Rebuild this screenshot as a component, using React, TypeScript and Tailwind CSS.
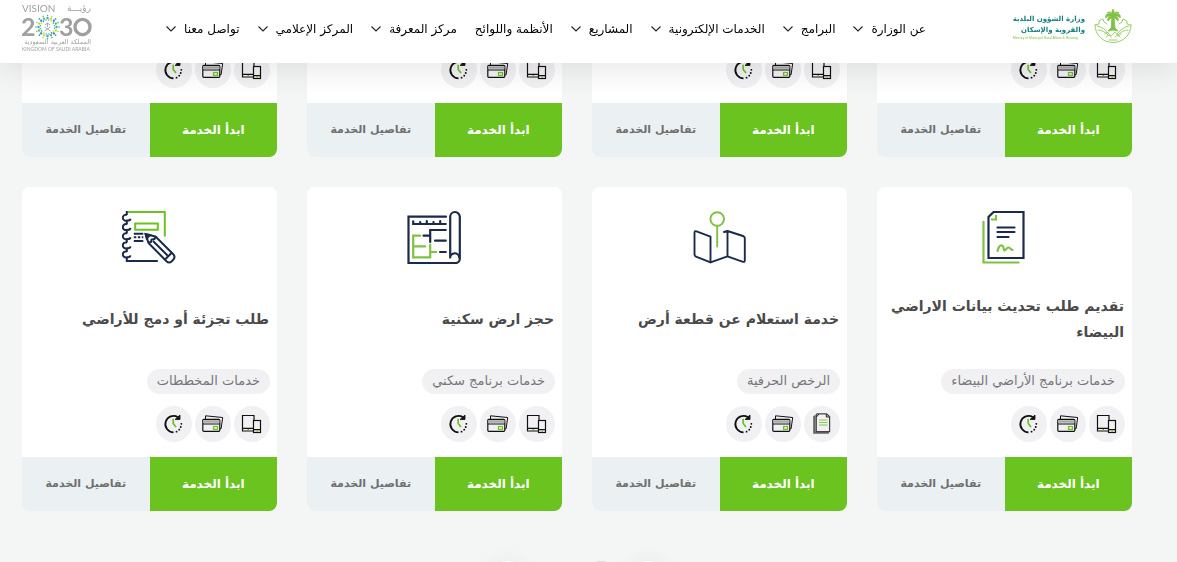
import type { ReactNode } from "react";

const NAVY = "#1b2a49";
const LIME = "#7fc241";

type Service = {
  title: string;
  category: string;
  icon: ReactNode;
  channel: "devices" | "papers";
};

const navItems = [
  { label: "عن الوزارة", menu: true },
  { label: "البرامج", menu: true },
  { label: "الخدمات الإلكترونية", menu: true },
  { label: "المشاريع", menu: true },
  { label: "الأنظمة واللوائح", menu: false },
  { label: "مركز المعرفة", menu: true },
  { label: "المركز الإعلامي", menu: true },
  { label: "تواصل معنا", menu: true },
];

function Chevron() {
  return (
    <svg width="10" height="6" viewBox="0 0 10 6" fill="none" stroke="#222" strokeWidth="1.1">
      <path d="M.5.5 5 5 9.5.5" />
    </svg>
  );
}

function PalmEmblem() {
  return (
    <svg width="38" height="36" viewBox="0 0 38 36" fill="none" stroke={LIME} strokeWidth=".8" strokeLinecap="round">
      <path d="M1 17c0 10 8 17.500 18 17.500S37 27 37 17" />
      <path d="M1 17l4-1v-3l4-2 1 3 3 2M37 17l-4-1v-3l-4-2-1 3-3 2" />
      <path d="M3 18c5 1 9 4 12 8M35 18c-5 1-9 4-12 8M4 22c4 0 7 2 10 5M34 22c-4 0-7 2-10 5" />
      <path d="M11 26c1-2 3-2 4 0s3 2 4 0 3-2 4 0 3 2 4 0M12 29c2-2 4-2 5 0M21 29c2-2 4-2 5 0M15 32h8" />
      <path d="M18.200 8h1.800l1 12 3 3-5-1-5 1 3-3z" fill={LIME} />
      <path
        d="M19 8c-1-4-4-5-6-3 2-.5 3 0 4 1-4-1-6 1-5 4 1-2 3-2 5-2-3 1-4 3-3 5 1-2 3-3 5-4 2 1 4 2 5 4 1-2 0-4-3-5 2 0 4 0 5 2 1-3-1-5-5-4 1-1 2-1.500 4-1-2-2-5-1-6 3M19 8c-2-3-1-5 0-7 1 2 2 4 0 7"
        fill={LIME}
      />
    </svg>
  );
}

function MinistryLogo() {
  return (
    <a href="#home" className="flex items-center gap-2 pe-3" aria-label="وزارة الشؤون البلدية والقروية والإسكان">
      <PalmEmblem />
      <svg width="74" height="32" viewBox="0 0 74 32" direction="rtl">
        <g fill="#12807c" fontFamily="DejaVu Sans, sans-serif" fontWeight="700" fontSize="7">
          <text x="73" y="11">وزارة الشؤون البلدية</text>
          <text x="73" y="22">والقروية والإسكان</text>
        </g>
        <text x="1" y="29" direction="ltr" fill={LIME} fontFamily="Liberation Sans, sans-serif" fontSize="3.300">
          Ministry of Municipal Rural Affairs &amp; Housing
        </text>
      </svg>
    </a>
  );
}

const rays = Array.from({ length: 16 }, (_, i) => i * 22.5);
const rayColors = ["#2bb3c0", "#c6d93a", "#3a8fd0", "#69b96b"];

function VisionLogo() {
  return (
    <a href="#vision" aria-label="رؤية 2030">
      <svg width="70" height="50" viewBox="0 0 70 50" direction="ltr">
        <g fill="#a0a0a0" fontFamily="Lato, sans-serif">
          <text x="0" y="9" fontSize="10">VISION</text>
          <text x="69" y="8" fontSize="9" textAnchor="end" fontFamily="DejaVu Sans, sans-serif">رؤيـــة</text>
          <text x="-1" y="33" fontSize="25" fontWeight="700">2</text>
          <text x="37" y="33" fontSize="25" fontWeight="700">3</text>
          <ellipse cx="60.500" cy="24" rx="7.500" ry="7.600" fill="none" stroke="#a0a0a0" strokeWidth="3.400" />
          <text x="69" y="41" fontSize="6.500" textAnchor="end" fontFamily="DejaVu Sans, sans-serif">المملكة العربية السعودية</text>
          <text x="0" y="48" fontSize="5">KINGDOM OF SAUDI ARABIA</text>
        </g>
        <g transform="translate(25.500 24)">
          {rays.map((angle, i) => (
            <g key={angle} transform={`rotate(${angle})`} fill={rayColors[i % 4]}>
              <circle cy="-11.500" r=".8" />
              <circle cy="-9" r="1.200" />
              <circle cx="1.300" cy="-7" r=".8" />
            </g>
          ))}
          <g stroke="#a0a0a0" strokeWidth=".9" fill="none">
            <path d="M0-4v4M-2.500-2 0-4l2.500 2M-3 4l6-4M3 4l-6-4" />
          </g>
        </g>
      </svg>
    </a>
  );
}

function DocumentIcon() {
  return (
    <svg width="55" height="54" viewBox="0 0 55 54" fill="none" stroke={NAVY} strokeWidth="2.200">
      <path d="M16.500 2h30v46h-35V7z" />
      <path d="M20.500 17.500h17M20.500 22h17M20.500 27h11" strokeLinecap="round" />
      <g stroke={LIME}>
        <path d="M6.500 11v41.500h36" />
        <path d="M19 5v4.500h-5" />
        <path d="M20.500 41c1-4 3-5.800 4.500-5.500 2.500.5 1 5 2.500 5s2-3 4-3 2 2 4 2.500" strokeLinecap="round" />
      </g>
    </svg>
  );
}

function MapIcon() {
  return (
    <svg width="55" height="54" viewBox="0 0 55 54" fill="none" stroke={NAVY} strokeWidth="1.900" strokeLinejoin="round" strokeLinecap="round">
      <path d="M18.500 52.300V26.700L4.500 21.300q-2-.6-2 1.500v21.500q0 1.700 1.500 2.300z" />
      <path d="M18.500 52.300l17-6V21l-3.500 1M35.500 21l15.500 5q1.800.6 1.800 2.300v22q0 2-1.800 1.500l-15.500-5.500" />
      <g stroke={LIME}>
        <circle cx="25.200" cy="9" r="6.800" />
        <path d="M25.200 16v20.500" />
      </g>
    </svg>
  );
}

function BlueprintIcon() {
  return (
    <svg width="55" height="54" viewBox="0 0 55 54" fill="none" stroke={NAVY} strokeWidth="2.200" strokeLinecap="round">
      <path d="M39 6.700H1.500V53h47a4.300 4.300 0 0 0 4.300-4.300V6.800a4.800 4.800 0 0 0-9.600 0v41.500a4.500 4.500 0 0 1 9-1" />
      <path d="M6.200 11.300V14h32.600M13.200 12v2M19.800 11v3M26.500 12v2M33.200 11v3" />
      <path d="M38.800 20H23.200v12M16.500 25.700h6.700M28 30.700h10.800M33 42h5.800" />
      <path d="M13.200 25.700h-7v21.600h17V34.700M6.200 36.300h12M23.200 42h6" stroke={LIME} />
    </svg>
  );
}

function NotebookIcon() {
  return (
    <svg width="55" height="54" viewBox="0 0 55 54" fill="none" stroke={NAVY} strokeWidth="2">
      <g stroke="#6ac31f">
        <path d="M5.500 2h37.300v24.500" />
        <path d="M13.200 13.500h22.600v6.200H13.200z" />
      </g>
      <path d="M4.800 1v4M4.800 10.500v4M4.800 20v3.500M4.800 29v3.500M4.800 38.500v3.500M4.800 47v4h31" />
      {[8, 17.3, 26.5, 35.7, 44.7].map((y) => (
        <path key={y} d="M5-3a3 3 0 1 0 0 5.500q3 .5 3.500-1.800" transform={`translate(0 ${y})`} />
      ))}
      <path d="M11.800 23.700h9.500M11.800 31h9.500" />
      <path d="M11.800 27.300h9.500" strokeDasharray="2.500 1.500" />
      <path d="M23.800 24.300l9.700 2.200L51.500 44.500q2 2.500 0 4.800l-2 2.200q-2.500 2-5-.3L26.500 33z" strokeLinejoin="round" />
      <path d="M26.500 32.500l2.500-.5.500-2.500 3-.5 1-2.500M31 31l14.500 14.500M43 49.500l7-7" />
      <path d="M23.500 24l4.500 1-3.300 3.500z" fill={NAVY} />
    </svg>
  );
}

function Bubble({ children }: { children: ReactNode }) {
  return (
    <span className="flex size-9 items-center justify-center rounded-full bg-[#f1f1f4]">
      <svg width="36" height="36" viewBox="0 0 36 36" fill="none" stroke="#111" strokeWidth="1.200">
        {children}
      </svg>
    </span>
  );
}

function DevicesBubble() {
  return (
    <Bubble>
      <path d="M19.500 25H8.500V9.500h11.500v5M9 22.300h10" />
      <rect x="19.500" y="14.500" width="7" height="12" fill="#f1f1f4" />
      <path d="M19.600 23.700h7" />
      <path d="M13.500 23.700h1.500M22.500 25.200h1.500" stroke="#6ac31f" />
    </Bubble>
  );
}

function PapersBubble() {
  return (
    <Bubble>
      <path d="M9.800 10v17.200h14.500v-1.500M11 9v17h13.500" stroke="#666" />
      <path d="M13 7.800h9.500l3.100 2.800v15H12.300V8.500z" stroke="#444" />
      <path d="M22.300 8v3h3M12 11.500l3-3.500" stroke="#222" strokeWidth="1" />
      <path d="M15 14h8.500M15 16.500h8.500M15 19h8.500" stroke="#6ac31f" strokeWidth=".8" />
    </Bubble>
  );
}

function PaymentBubble() {
  return (
    <Bubble>
      <path d="M10.500 13V9.800l17.200 1.700-1.600 11.200-1.500.2" strokeWidth="1" />
      <rect x="7.800" y="13.300" width="17" height="12" rx="1" />
      <path d="M8 15.600h16.500" stroke="#aaa" strokeWidth="2.500" />
      <path d="M8 18h16.500" />
      <rect x="18.500" y="20.500" width="4" height="2.800" stroke="#6ac31f" />
    </Bubble>
  );
}

function ClockBubble() {
  return (
    <Bubble>
      <path d="M22 11.200A8.200 8.200 0 1 0 17.500 26.300" strokeWidth="1.800" />
      <path d="M24 9v4.500h-5z" fill="#111" strokeWidth=".8" />
      <path d="M20.500 25.700h.1M23.200 23.700h.1M24.700 21h.1M25.300 17.800h.1" strokeWidth="1.800" strokeLinecap="round" />
      <path d="M17.200 12.800v4.700l2.800 3.500" stroke="#6ac31f" strokeWidth="1.700" />
    </Bubble>
  );
}

function Channels({ first = "devices" }: { first?: Service["channel"] }) {
  return (
    <div className="flex gap-[3px] px-[7px]">
      {first === "papers" ? <PapersBubble /> : <DevicesBubble />}
      <PaymentBubble />
      <ClockBubble />
    </div>
  );
}

function CardActions() {
  return (
    <div className="mt-[15px] grid h-[54px] grid-cols-2 font-bold">
      <button type="button" className="bg-[#6ac31f] text-xs text-white">
        ابدأ الخدمة
      </button>
      <button type="button" className="bg-[#ebf1f2] text-[11px] text-[#707070]">
        تفاصيل الخدمة
      </button>
    </div>
  );
}

const services: Service[] = [
  {
    title: "تقديم طلب تحديث بيانات الاراضي البيضاء",
    category: "خدمات برنامج الأراضي البيضاء",
    icon: <DocumentIcon />,
    channel: "devices",
  },
  {
    title: "خدمة استعلام عن قطعة أرض",
    category: "الرخص الحرفية",
    icon: <MapIcon />,
    channel: "papers",
  },
  {
    title: "حجز ارض سكنية",
    category: "خدمات برنامج سكني",
    icon: <BlueprintIcon />,
    channel: "devices",
  },
  {
    title: "طلب تجزئة أو دمج للأراضي",
    category: "خدمات المخططات",
    icon: <NotebookIcon />,
    channel: "devices",
  },
];

function ServiceCard({ service }: { service: Service }) {
  return (
    <article className="overflow-hidden rounded-lg bg-white">
      <div className="flex justify-center pt-[23px]">{service.icon}</div>
      <h3 className="mt-[29px] flex h-[52px] items-center px-2 text-sm leading-[26px] font-bold text-[#4a4a4a]">
        {service.title}
      </h3>
      <div className="mt-6 mb-3 flex px-[7px]">
        <span className="h-[25px] rounded-full bg-[#f1f1f4] px-[10px] text-[13px] leading-[23px] text-[#777]">
          {service.category}
        </span>
      </div>
      <Channels first={service.channel} />
      <CardActions />
    </article>
  );
}

export default function App() {
  return (
    <div dir="rtl" className="h-screen overflow-hidden bg-[#f4f6f6] font-['DejaVu_Sans',sans-serif]">
      <header className="fixed inset-x-0 top-0 z-10 flex h-[63px] items-start justify-between bg-white ps-[45px] pe-[22px] shadow-[0_8px_30px_rgba(0,0,0,0.09)]">
        <div className="pt-2">
          <MinistryLogo />
        </div>
        <nav className="flex h-[58px] items-center gap-[18px]">
          {navItems.map((item) => (
            <a
              key={item.label}
              href="#menu"
              className="flex items-center gap-2 text-xs font-medium whitespace-nowrap text-black"
            >
              {item.label}
              {item.menu && <Chevron />}
            </a>
          ))}
        </nav>
        <div className="pt-[3px]">
          <VisionLogo />
        </div>
      </header>

      <main className="ps-[45px] pe-[22px] pt-10">
        <div className="grid grid-cols-4 gap-[30px]">
          {services.map((service) => (
            <article key={service.title} className="overflow-hidden rounded-b-lg bg-white pt-3">
              <Channels />
              <CardActions />
            </article>
          ))}
          {services.map((service) => (
            <ServiceCard key={service.title} service={service} />
          ))}
        </div>

        <div className="mt-[50px] flex justify-center gap-[7px]">
          <button type="button" aria-label="السابق" className="size-10 rounded-full bg-white shadow-[0_0_20px_rgba(0,0,0,0.06)]" />
          <button type="button" aria-label="الصفحة الأولى" className="size-10 rounded-full bg-[#d9dbdb]" />
          <button type="button" aria-label="الصفحة الثانية" className="size-10 rounded-full" />
          <button type="button" aria-label="التالي" className="size-10 rounded-full bg-white shadow-[0_0_20px_rgba(0,0,0,0.06)]" />
        </div>
      </main>
    </div>
  );
}
